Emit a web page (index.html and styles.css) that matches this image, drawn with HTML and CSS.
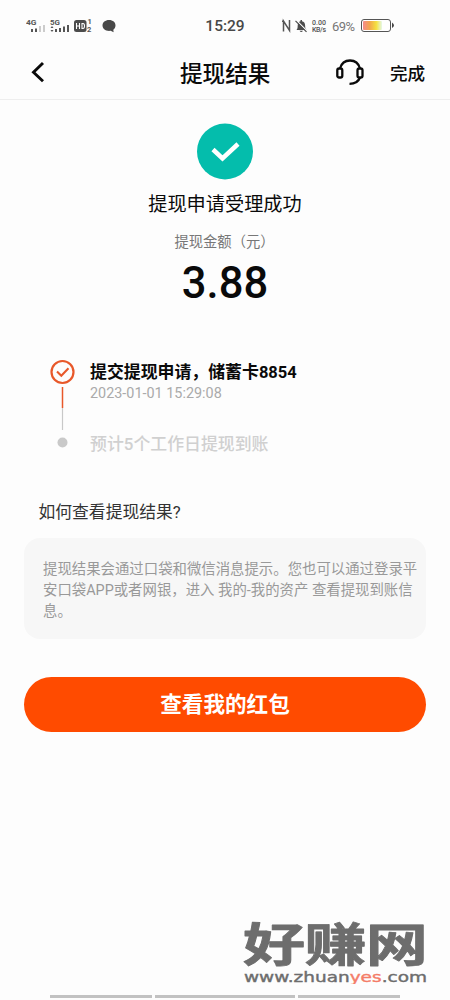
FILE: index.html
```html
<!DOCTYPE html>
<html lang="zh-CN">
<head>
<meta charset="utf-8">
<title>提现结果</title>
<link rel="stylesheet" href="styles.css">
</head>
<body>
<div class="screen">
  <div class="status">
    <svg class="signals" width="96" height="20" viewBox="0 0 96 20">
      <g class="tiny"><text x="0" y="8.500" textLength="10.500" lengthAdjust="spacingAndGlyphs">4G</text><text x="24" y="8.500" textLength="10" lengthAdjust="spacingAndGlyphs">5G</text></g>
      <g fill="#555"><path d="M5 13h2v3h-2zM9 12.500h2v3.500h-2z"/><path fill="#ccc" d="M13 10h2v6h-2zM17 9h2v7h-2z"/>
      <path d="M24.500 12l1.500-2 1.500 2zM24.500 14l1.500 2 1.500-2zM29 13h2v3h-2zM33 12h2v4h-2zM37 10.500h2v5.500h-2zM41 9h2v7h-2z"/></g>
      <rect x="48" y="4" width="12.500" height="12" rx="2.500" fill="#4c4c4c"/>
      <path d="M50.500 7v6M53.500 7v6M50.500 10h3M56 7.500v5h1q1.500 0 1.500-2.500t-1.500-2.500z" fill="none" stroke="#fff" stroke-width="1.100"/>
      <g class="tiny num"><text x="61.500" y="8">1</text><text x="61" y="16">2</text></g>
      <path d="M83 4c4 0 6.500 2.300 6.500 5.500 0 2-1 3.300-2.200 4.200l.3 2.600-3-1.500c-5 .6-8.100-2-8.100-5.300 0-3.200 2.700-5.500 6.500-5.500z" fill="#484848"/>
    </svg>
    <div class="clock">15:29</div>
    <svg class="system" width="116" height="20" viewBox="0 0 116 20">
      <path d="M2.500 15.500V5l6 9.500V5M1 5.200h1.500M8.500 14.500V4" fill="none" stroke="#555" stroke-width="1.500"/>
      <path d="M15.500 14c1.500-1.500 1-3.500 1.300-5.500.4-2 1.500-3 2.700-3.200V4h1.500v1.300c2 .3 3 2 3.100 4 .1 2 0 3.200 1.400 4.700zM18.500 14.800h3.500q-1.700 2.500-3.500 0z" fill="#4c4c4c"/>
      <path d="M15 4l11.500 11.500" stroke="#fefefe" stroke-width="1.200"/><path d="M14.500 4.800l11 11" stroke="#4c4c4c" stroke-width="1.200"/>
      <g class="speed"><text x="31" y="9" textLength="14">0.00</text><text x="31" y="16" textLength="14">KB/s</text></g>
      <text class="percent" x="51" y="14.500" textLength="23">69%</text>
      <defs><linearGradient id="charge"><stop offset="0" stop-color="#f58a8c"/><stop offset=".35" stop-color="#f2a64d"/><stop offset=".7" stop-color="#f5e13f"/><stop offset="1" stop-color="#e5f9e9"/></linearGradient></defs>
      <rect x="80.500" y="3.500" width="29" height="12" rx="2.500" fill="#fff" stroke="#555"/>
      <rect x="82" y="5" width="19" height="9" rx="1" fill="url(#charge)"/>
      <path d="M111 6.500q4 2.800 0 5.500z" fill="#444"/>
    </svg>
  </div>
  <header class="bar">
    <svg class="back" width="16" height="22" viewBox="0 0 16 22"><path d="M13 2L3.500 11.200l9.500 9" fill="none" stroke="#0a0a0a" stroke-width="2.900"/></svg>
    <h1 class="title">提现结果</h1>
    <svg class="service" width="30" height="28" viewBox="0 0 30 28"><g fill="none" stroke="#0a0a0a" stroke-width="2.300"><path d="M5 10.500C6.500 5 10.500 2.500 15 2.500S23.500 5 25 10.500M25 19.500c-1.500 4-5 6.300-10.500 6.300"/><rect x="2.300" y="10.500" width="5" height="9" rx="1.800"/><rect x="22.500" y="10.500" width="5" height="9" rx="1.800"/></g></svg>
    <span class="done">完成</span>
  </header>
  <main>
    <section class="result">
      <svg width="56" height="57" viewBox="0 0 56 57"><circle cx="28" cy="28.500" r="28" fill="#04bdac"/><path d="M16 26.500l9.500 9L41 21" fill="none" stroke="#fff" stroke-width="4.500"/></svg>
      <h2 class="headline">提现申请受理成功</h2>
      <div class="label">提现金额（元）</div>
      <div class="amount">3.88</div>
    </section>
    <section class="steps">
      <svg class="track" width="26" height="92" viewBox="0 0 26 92">
        <circle cx="12.500" cy="13" r="11" fill="none" stroke="#e8582a" stroke-width="2.200"/>
        <path d="M7 12.500l4.300 4.300 7.200-7.500" fill="none" stroke="#e8582a" stroke-width="2.100"/>
        <path d="M12.500 28v21" stroke="#e8582a" stroke-width="1.500"/><path d="M12.500 49v22" stroke="#c8c8c8" stroke-width="1.200"/>
        <circle cx="12.500" cy="83.500" r="5" fill="#c9c9c9"/>
      </svg>
      <div class="step-texts">
        <div class="step-title">提交提现申请，储蓄卡<span class="card">8854</span></div>
        <div class="step-time">2023-01-01 15:29:08</div>
        <div class="step-next">预计5个工作日提现到账</div>
      </div>
    </section>
    <h3 class="question">如何查看提现结果?</h3>
    <p class="note">提现结果会通过口袋和微信消息提示。您也可以通过登录平<br>安口袋APP或者网银，进入 我的-我的资产 查看提现到账信<br>息。</p>
    <button class="cta">查看我的红包</button>
  </main>
  <div class="watermark">
    <svg width="190" height="84" viewBox="0 0 190 84">
      <text class="brand" transform="translate(3 61) scale(1.350 1)" textLength="137">好赚网</text>
      <text class="site" x="4" y="81.500" textLength="183" lengthAdjust="spacingAndGlyphs">www.zhuan<tspan class="accent">yes</tspan>.com</text>
    </svg>
  </div>
  <div class="gesture"><i class="side"></i><i class="mid"></i><i class="side"></i></div>
</div>
</body>
</html>
```
FILE: styles.css
```css
body { margin: 0; background: #fdfdfd; font-family: Roboto, "Noto Sans CJK SC", sans-serif; color: #0a0a0a; }
h1, h2, h3, p { margin: 0; font-weight: 400; }
svg { display: block; flex: none; }
.screen { width: 450px; height: 1000px; display: flex; flex-direction: column; overflow: hidden; box-sizing: border-box; }
.status { height: 45px; padding: 16px 0 0 26px; box-sizing: border-box; display: flex; flex: none; }
.clock { width: 60px; margin: 0 26px 0 73px; text-align: center; font-size: 15.500px; line-height: 20px; font-weight: 500; color: #484848; }
.tiny { font-size: 8px; font-weight: 700; fill: #555; }
.num { font-size: 7.500px; }
.speed { font-size: 7px; font-weight: 500; fill: #555; }
.percent { font-size: 13px; fill: #777; }
.bar { height: 55px; box-sizing: border-box; border-bottom: 1px solid #eee; display: flex; align-items: center; padding: 0 24px 0 30px; flex: none; }
.title { font-size: 22.600px; font-weight: 500; width: 92px; margin-left: 134px; white-space: nowrap; }
.service { margin-left: 63px; }
.done { font-size: 17.600px; font-weight: 500; margin-left: 25px; white-space: nowrap; }
.result { display: flex; flex-direction: column; align-items: center; padding-top: 23px; }
.headline { font-size: 19.200px; line-height: 28px; margin-top: 11px; }
.label { font-size: 14.300px; line-height: 20px; margin-top: 13px; color: #777; margin-right: 1px; }
.amount { font-size: 43.500px; line-height: 50px; margin-top: 7px; font-weight: 500; }
.steps { display: flex; gap: 14px; padding: 49px 0 0 50px; height: 92px; }
.track { margin-top: 1px; }
.step-title { font-size: 16.900px; line-height: 24px; font-weight: 700; margin-top: 2px; }
.card { font-size: 16.500px; }
.step-time { font-size: 14.400px; line-height: 18px; color: #aaa; }
.step-next { font-size: 16.900px; line-height: 24px; font-weight: 500; color: #d0d0d0; margin-top: 29px; }
.question { font-size: 16.800px; line-height: 24px; margin: 50px 0 0 38.500px; color: #333; }
.note { margin: 14px 24px 0; padding: 21px 0 0 19px; height: 101px; box-sizing: border-box; background: #f7f7f7; border-radius: 16px; color: #999; font-size: 14.400px; line-height: 21px; white-space: nowrap; }
.cta { display: block; width: 402px; height: 55px; margin: 38px 24px 0; padding: 0 0 5px; border: 0; border-radius: 28px; background: #ff4b00; color: #fff; font: 700 21.600px Roboto, "Noto Sans CJK SC", sans-serif; }
.watermark { margin-top: auto; align-self: flex-end; padding-right: 20px; }
.brand { font: 700 46px "Noto Sans CJK SC", sans-serif; fill: #6d6d6d; stroke: #6d6d6d; stroke-width: .8px; stroke-linejoin: round; }
.site { font: 400 14px "DejaVu Sans", sans-serif; fill: #6d6d6d; stroke: #6d6d6d; stroke-width: .4px; }
.accent { fill: #f47c68; stroke: #f47c68; }
.gesture { display: flex; gap: 3px; padding: 11px 0 2px 50px; }
.gesture i { height: 3px; background: #c2c2c2; }
.side { width: 102px; }
.mid { width: 140px; }
```
